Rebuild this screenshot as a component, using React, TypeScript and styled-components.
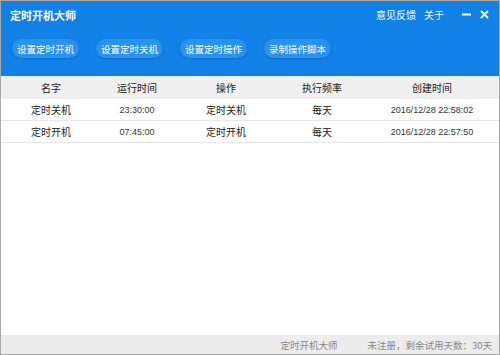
import React from 'react';
import styled, { createGlobalStyle } from 'styled-components';

const GlobalStyle = createGlobalStyle`
  html, body {
    margin: 0;
    padding: 0;
    background: #fff;
  }
  * {
    box-sizing: border-box;
  }
`;

const Window = styled.div`
  width: 500px;
  height: 355px;
  border: 1px solid #a9a9a9;
  display: flex;
  flex-direction: column;
  font-family: "Liberation Sans", "Noto Sans CJK SC", sans-serif;
  background: #fff;
  overflow: hidden;
`;

const Header = styled.div`
  background: #1181e8;
  height: 75px;
  display: flex;
  flex-direction: column;
  flex-shrink: 0;
`;

const TitleBar = styled.div`
  display: flex;
  align-items: center;
  height: 26px;
  padding: 0 10px 0 9px;
`;

const Title = styled.div`
  color: #fff;
  font-size: 11px;
  font-weight: bold;
  flex: 1;
  padding-top: 1px;
`;

const TopLink = styled.span`
  color: #fff;
  font-size: 10px;
  margin-left: 8px;
`;

const WinButtons = styled.div`
  display: flex;
  align-items: center;
  gap: 9px;
  margin-left: 18px;
`;

const Toolbar = styled.div`
  display: flex;
  gap: 17px;
  padding: 12px 0 0 11px;
`;

const ToolButton = styled.button`
  width: 67px;
  height: 19px;
  border-radius: 10px;
  border: none;
  background: #2992ef;
  box-shadow: 0 1px 2px rgba(0, 60, 140, 0.35);
  color: #fff;
  font-family: "Noto Sans CJK SC", sans-serif;
  font-size: 9.5px;
  padding: 0;
  cursor: pointer;
`;

const Table = styled.div`
  flex: 1;
  display: flex;
  flex-direction: column;
`;

const Row = styled.div<{ $head?: boolean }>`
  display: grid;
  grid-template-columns: 100px 72px 106px 86px 1fr;
  height: ${p => (p.$head ? '23px' : '22px')};
  align-items: center;
  background: ${p => (p.$head ? '#efefef' : '#fff')};
  border-bottom: 1px solid ${p => (p.$head ? '#efefef' : '#e8e8e8')};
  font-size: 10px;
  color: #222;
`;

const Cell = styled.div<{ $num?: boolean }>`
  text-align: center;
  font-family: ${p =>
    p.$num ? '"Liberation Sans", sans-serif' : '"Noto Sans CJK SC", sans-serif'};
  font-size: ${p => (p.$num ? '9px' : '10px')};
  color: ${p => (p.$num ? '#333' : '#222')};
  white-space: nowrap;
`;

const Footer = styled.div`
  height: 19px;
  background: #ececec;
  display: flex;
  align-items: center;
  justify-content: flex-end;
  padding-right: 7px;
  font-family: "Noto Sans CJK SC", sans-serif;
  font-size: 9.5px;
  color: #888;
  flex-shrink: 0;
`;

const FooterName = styled.span`
  margin-right: 30px;
`;

const buttons = ['设置定时开机', '设置定时关机', '设置定时操作', '录制操作脚本'];

const tasks = [
  { name: '定时关机', time: '23:30:00', op: '定时关机', freq: '每天', created: '2016/12/28 22:58:02' },
  { name: '定时开机', time: '07:45:00', op: '定时开机', freq: '每天', created: '2016/12/28 22:57:50' },
];

export default function App() {
  return (
    <>
      <GlobalStyle />
      <Window>
        <Header>
          <TitleBar>
            <Title>定时开机大师</Title>
            <TopLink>意见反馈</TopLink>
            <TopLink>关于</TopLink>
            <WinButtons>
              <svg width="9" height="9" viewBox="0 0 9 9">
                <rect x="0" y="3.5" width="9" height="2" fill="#fff" />
              </svg>
              <svg width="9" height="9" viewBox="0 0 9 9">
                <path d="M1 1 L8 8 M8 1 L1 8" stroke="#fff" strokeWidth="1.8" />
              </svg>
            </WinButtons>
          </TitleBar>
          <Toolbar>
            {buttons.map(b => (
              <ToolButton key={b}>{b}</ToolButton>
            ))}
          </Toolbar>
        </Header>
        <Table>
          <Row $head>
            <Cell>名字</Cell>
            <Cell>运行时间</Cell>
            <Cell>操作</Cell>
            <Cell>执行频率</Cell>
            <Cell>创建时间</Cell>
          </Row>
          {tasks.map(t => (
            <Row key={t.created}>
              <Cell>{t.name}</Cell>
              <Cell $num>{t.time}</Cell>
              <Cell>{t.op}</Cell>
              <Cell>{t.freq}</Cell>
              <Cell $num>{t.created}</Cell>
            </Row>
          ))}
        </Table>
        <Footer>
          <FooterName>定时开机大师</FooterName>
          <span>未注册，剩余试用天数：30天</span>
        </Footer>
      </Window>
    </>
  );
}
